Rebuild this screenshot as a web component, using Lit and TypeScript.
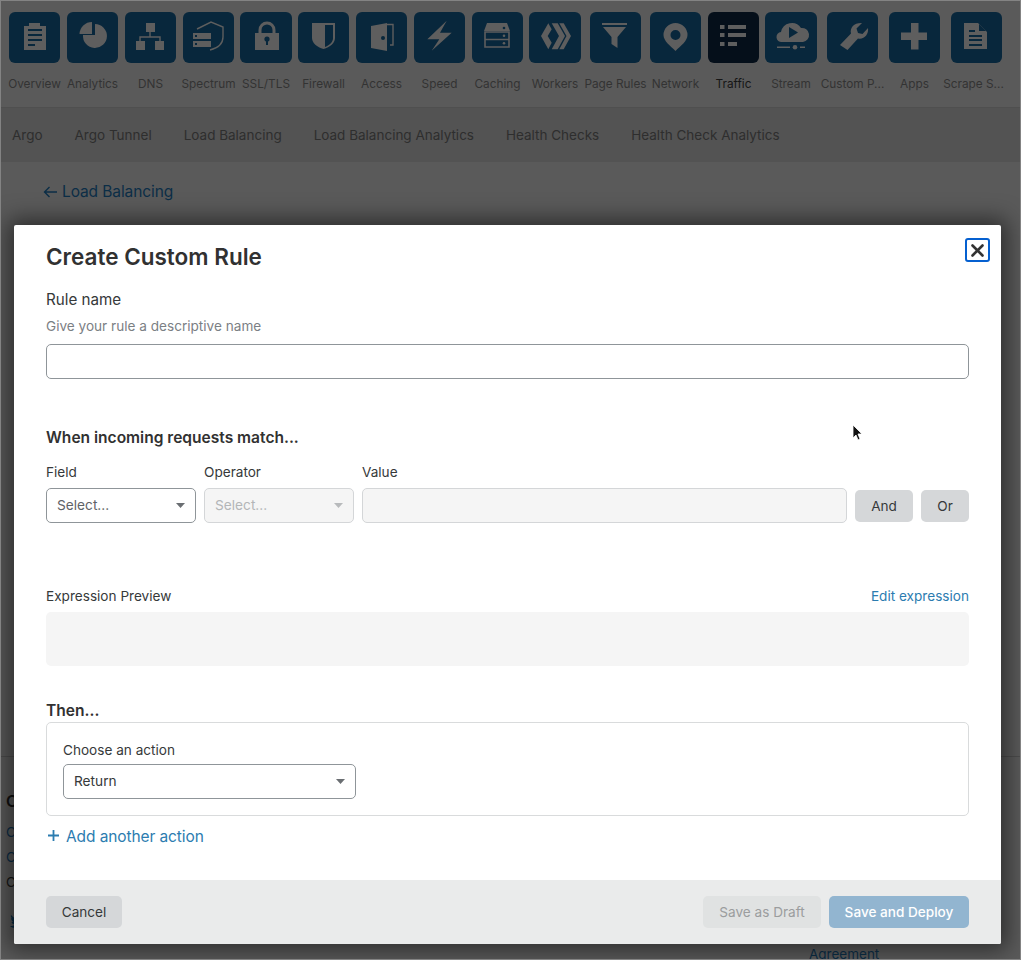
import { LitElement, html, css, svg } from "lit";
import { customElement } from "lit/decorators.js";

const hole = "#08273c";
const icons: Record<string, unknown> = {
  Overview: svg`<path d="M15 14h5v-3h11v3h6v24H15z"/><path fill="${hole}" d="M19 17h14v2H19zM19 22h14v2H19zM19 27h14v2H19zM19 32h7v2h-7z"/>`,
  Analytics: svg`<path d="M16 23a12 12 0 1 0 12-11v11z"/><path d="M12.5 22A12.5 12.5 0 0 1 25 10v12z"/>`,
  DNS: svg`<path d="M21 11h9v9h-9zM11 29h9v9h-9zM30 29h9v9h-9z"/><path d="M25 20v5M15 29v-4h20v4" fill="none" stroke="#5e5e5e" stroke-width="1.4"/>`,
  Spectrum: svg`<path d="M14 17 28 10l12 5v10c0 7-5 11-13 13" fill="none" stroke="#5e5e5e" stroke-width="1.4"/><path d="M10 21h18v6H10zM10 29h18v6H10z"/><path fill="${hole}" d="M12 23h2v2h-2zM12 31h2v2h-2z"/>`,
  "SSL/TLS": svg`<path d="M14 21h24v17H14z"/><path d="M19 21v-3a7 7 0 0 1 14 0v3" fill="none" stroke="#5e5e5e" stroke-width="3"/><circle cx="26" cy="27" r="2.6" fill="${hole}"/><path fill="${hole}" d="M25 28h2v5h-2z"/>`,
  Firewall: svg`<path d="M14 11h23v15c0 5-5 9-11.500 11C19 35 14 31 14 26z"/><path fill="${hole}" d="M27 13h8v13c0 4-3 7-8 9z"/>`,
  Access: svg`<path d="M15 14 31 11v28l-16-3z"/><path d="M31 12.500h6V33h-3" fill="none" stroke="#5e5e5e" stroke-width="1.400"/><circle cx="27" cy="26" r="2" fill="${hole}"/>`,
  Speed: svg`<path d="M32.700 8.700 13.300 27.300h12L17.700 38.700l20-18H26z"/>`,
  Caching: svg`<path d="M15 11h20l3 8H12z"/><path d="M13 20h24v7.500H13zM13 27.500h24V35H13z" fill="none" stroke="#5e5e5e" stroke-width="1.600"/><circle cx="32" cy="23.700" r="1.300"/><circle cx="32" cy="31.300" r="1.300"/><circle cx="32" cy="16" r="1.300" fill="${hole}"/>`,
  Workers: svg`<path d="M11 24 18.300 11.300l3.400 6L17.700 24l4 6.700-3.400 6.600zM21.700 11.300h6L35 24l-7.300 13.300h-6L29 24zM29.300 11.300h4.400L41 24l-7.300 13.300h-4.400L36.500 24z"/>`,
  "Page Rules": svg`<path d="M12 11h25v2H12zM13 15h23l-8.500 10v11l-6-4v-7z"/>`,
  Network: svg`<path fill-rule="evenodd" d="M25.500 11a12 12 0 0 1 12 12c0 6-7 11-12 16-5-5-12-10-12-16a12 12 0 0 1 12-12zm0 7a5 5 0 1 0 0 10 5 5 0 0 0 0-10z"/>`,
  Traffic: svg`<path d="M12 13h4.500v4H12zM20 13h18v4H20zM12 21h4.500v4H12zM20 21h18v4H20zM12 30h4.500v4H12zM20 30h9v4h-9z"/>`,
  Stream: svg`<path d="M16 30a5 5 0 0 1-1-10 11 11 0 0 1 20-4 7 7 0 0 1 2 14z"/><path fill="${hole}" d="M23 15v11l9-5.500z"/><path d="M11 34.500h13v1.500H11zM34 34.500h5v1.500h-5z"/><circle cx="29" cy="35.300" r="2.300"/>`,
  "Custom P...": svg`<path d="M41 16c1 6-4 12-10 10.500L20.500 38 13 33l11-11.500c-1.500-6 3.500-11 11-10.500l-5.500 5.500 1.500 4.500 4.500 1z"/>`,
  Apps: svg`<path d="M22 11h7.500v9.500H38V28h-8.500v9.500H22V28h-10v-7.500h10z"/>`,
  "Scrape S...": svg`<path d="M13 11h14l9 9v17H13z"/><path fill="${hole}" d="M28 12v7h7zM18 18h6v2h-6zM18 23h13v2H18zM18 27h13v2H18zM18 32h13v2H18z"/>`,
};

// [label, left gap before the tile, tile width]
const apps: [string, number, number][] = [
  ["Overview", 0, 51], ["Analytics", 7, 51], ["DNS", 7, 51], ["Spectrum", 7, 51], ["SSL/TLS", 6, 52],
  ["Firewall", 6, 51], ["Access", 7, 51], ["Speed", 7, 51], ["Caching", 7, 51], ["Workers", 6, 52],
  ["Page Rules", 9, 51], ["Network", 9, 51], ["Traffic", 7, 51], ["Stream", 6, 52], ["Custom P...", 10, 51],
  ["Apps", 11, 51], ["Scrape S...", 11, 51],
];

const tabs = ["Argo", "Argo Tunnel", "Load Balancing", "Load Balancing Analytics", "Health Checks", "Health Check Analytics"];

const caret = html`<svg class="caret" width="9" height="5" viewBox="0 0 9 5"><path d="M0 0h9L4.500 5z" fill="currentColor"/></svg>`;

@customElement("app-root")
export class AppRoot extends LitElement {
  static styles = css`
    :host { display: block; font-family: Inter, "Noto Sans", sans-serif; }
    * { box-sizing: border-box; }
    .page { position: relative; width: 1021px; height: 960px; overflow: hidden; background: #5a5a5a; border: 1px solid #838383; color: #2e2e2e; font-size: 13.5px; }
    .apps { display: flex; height: 107px; padding: 11px 0 0 8px; border-bottom: 1px solid #4f4f4f; }
    .app { display: flex; flex-direction: column; align-items: center; }
    .tile { width: 100%; height: 51px; border-radius: 6px; background: #08273c; display: flex; justify-content: center; }
    .tile svg { fill: #5e5e5e; }
    .app.on .tile { background: #050f1a; }
    .app span { margin-top: 14px; font-size: 11.8px; line-height: 14px; white-space: nowrap; color: #333; }
    .app.on span { color: #161616; }
    .app:last-child span { margin-right: 6px; }
    .tabs { display: flex; gap: 32px; height: 54px; align-items: center; padding-left: 11px; background: #535353; }
    .back { display: flex; align-items: center; gap: 4px; padding: 20px 0 0 42px; font-size: 15.5px; line-height: 20px; letter-spacing: -0.1px; color: #0c2e47; }
    .foot { position: absolute; left: 0; right: 0; top: 755px; bottom: 0; border-top: 1px solid #4c4c4c; padding: 34px 0 0 5px; }
    .foot h4 { margin: 0 0 12px; font-size: 16px; line-height: 20px; font-weight: 600; color: #111; }
    .foot p { margin: 0 0 6px; line-height: 19px; color: #0c2e47; }
    .foot p.dark { color: #161616; }
    .foot svg { display: block; margin: 21px 0 0 4px; fill: #0c2e47; }
    .agree { position: absolute; left: 808px; top: 188px; line-height: 18px; color: #0c2e47; }
    .modal { position: absolute; left: 13px; top: 224px; width: 987px; height: 719px; background: #fff; border-radius: 2px; box-shadow: 0 0 22px 6px rgba(0,0,0,.5); display: flex; flex-direction: column; color: #36393a; }
    .body { flex: 1; padding: 17px 32px 0; }
    h2 { margin: 0; font-size: 22.5px; line-height: 30px; font-weight: 600; color: #313131; }
    .close { position: absolute; top: 13px; right: 11px; width: 25px; height: 24px; border: 2px solid #0560d0; border-radius: 3px; display: flex; align-items: center; justify-content: center; }
    .name { margin-top: 18px; font-size: 15.2px; line-height: 20px; }
    .hint { margin-top: 6px; font-size: 13.6px; line-height: 20px; color: #7b8084; }
    .input { border: 1px solid #8f9599; border-radius: 5px; height: 35px; background: #fff; }
    .ruleinput { margin-top: 8px; }
    h3 { margin: 0; font-size: 15.55px; line-height: 20px; font-weight: 600; color: #313131; }
    .when { margin-top: 49px; }
    .row { display: grid; grid-template-columns: 150px 150px 485px 58px 48px; column-gap: 8px; margin-top: 14px; align-items: end; }
    label { display: block; font-size: 13.6px; line-height: 20px; margin-bottom: 6px; color: #36393a; }
    .select { display: flex; align-items: center; justify-content: space-between; padding: 0 10px; font-size: 13.7px; color: #5f6367; }
    .select span { margin-top: -2px; }
    .select.val { color: #36393a; }
    .caret { color: #6a6e72; }
    .disabled { background: #f5f5f5; border-color: #d4d6d8; color: #b3b6b8; }
    .disabled .caret { color: #b8babc; }
    .btn { display: flex; align-items: center; justify-content: center; height: 32px; border-radius: 5px; background: #d5d7d9; font-size: 13.6px; margin-bottom: 1px; color: #36393a; }
    .prevhead { display: flex; justify-content: space-between; margin-top: 63px; }
    .prevhead label { margin: 0; }
    .edit { font-size: 13.6px; line-height: 20px; color: #2c7cb0; }
    .preview { margin-top: 6px; height: 54px; background: #f5f5f5; border-radius: 5px; }
    .then { margin-top: 35px; }
    .actionbox { margin-top: 1px; height: 94px; border: 1px solid #d9dbdc; border-radius: 5px; padding: 17px 16px 0; }
    .actionbox label { margin-bottom: 4px; }
    .actionbox .select { width: 293px; }
    .add { display: flex; align-items: center; gap: 7px; margin-top: 11px; padding-left: 2px; font-size: 15.5px; line-height: 20px; letter-spacing: -0.1px; color: #2c7cb0; }
    .add svg { margin-top: -4px; }
    .footer { height: 64px; background: #eaebeb; padding: 16px 32px; display: flex; align-items: flex-start; gap: 8px; border-radius: 0 0 2px 2px; }
    .footer .btn { margin: 0; }
    .footer .cancel { width: 76px; margin-right: auto; }
    .draft { width: 118px; background: #e0e2e2; color: #9b9d9e; }
    .deploy { width: 140px; background: #92b5d0; color: #fff; font-weight: 500; }
    .cursor { position: absolute; left: 851px; top: 423px; }
  `;

  render() {
    return html`<div class="page">
      <div class="apps">
        ${apps.map(([n, gap, w]) => html`<div class="app ${n === "Traffic" ? "on" : ""}" style="margin-left:${gap}px;width:${w}px">
          <div class="tile"><svg width="51" height="51" viewBox="0 0 51 51">${icons[n]}</svg></div>
          <span>${n}</span>
        </div>`)}
      </div>
      <div class="tabs">${tabs.map((t) => html`<div>${t}</div>`)}</div>
      <div class="back">
        <svg width="15" height="12" viewBox="0 0 15 12" fill="none" stroke="#0c2e47" stroke-width="1.400"><path d="M14 6H1.500M6.500 1 1.500 6l5 5"/></svg>
        Load Balancing
      </div>
      <div class="foot">
        <h4>Contact</h4>
        <p>Contact</p>
        <p>Chat</p>
        <p class="dark">Call</p>
        <svg width="18" height="16" viewBox="0 0 18 16"><path d="M1 2c2 2.500 4 3.500 7 4 0-3 3-5 6-3l2-1-1 2 2-.5-2 2c0 6-5 10-10 9.500-2 0-4-1-5-2 2 .2 3.500-.3 5-1.500-2 0-3-1-3.500-2.500h1.500C2 8 1 6.500 1 5l1.500.500C1 4.500.5 3.500 1 2z"/></svg>
        <div class="agree">Agreement</div>
      </div>
      <div class="modal">
        <div class="close"><svg width="13" height="13" viewBox="0 0 13 13" stroke="#333" stroke-width="2.600" stroke-linecap="round"><path d="M1.500 1.500l10 10M11.500 1.500l-10 10"/></svg></div>
        <div class="body">
          <h2>Create Custom Rule</h2>
          <div class="name">Rule name</div>
          <div class="hint">Give your rule a descriptive name</div>
          <div class="input ruleinput"></div>
          <h3 class="when">When incoming requests match...</h3>
          <div class="row">
            <div><label>Field</label><div class="input select"><span>Select...</span>${caret}</div></div>
            <div><label>Operator</label><div class="input select disabled"><span>Select...</span>${caret}</div></div>
            <div><label>Value</label><div class="input disabled"></div></div>
            <div class="btn">And</div>
            <div class="btn">Or</div>
          </div>
          <div class="prevhead"><label>Expression Preview</label><div class="edit">Edit expression</div></div>
          <div class="preview"></div>
          <h3 class="then">Then...</h3>
          <div class="actionbox">
            <label>Choose an action</label>
            <div class="input select val"><span>Return</span>${caret}</div>
          </div>
          <div class="add"><svg width="11" height="11" viewBox="0 0 11 11" stroke="#2c7cb0" stroke-width="1.800"><path d="M5.500 0v11M0 5.500h11"/></svg>Add another action</div>
        </div>
        <div class="footer">
          <div class="btn cancel">Cancel</div>
          <div class="btn draft">Save as Draft</div>
          <div class="btn deploy">Save and Deploy</div>
        </div>
      </div>
      <svg class="cursor" width="12" height="18" viewBox="0 0 12 18"><path d="M1 1v13l3-3 2 5 2-1-2-5h4z" fill="#111" stroke="#fff" stroke-width=".8"/></svg>
    </div>`;
  }
}
